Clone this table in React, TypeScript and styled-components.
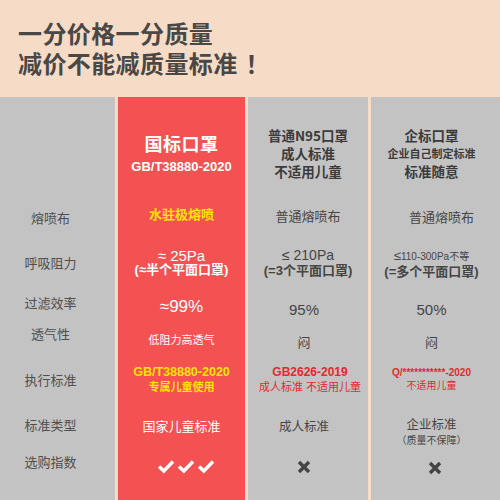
import React from 'react';
import styled, { createGlobalStyle } from 'styled-components';

const PEACH = '#f6dcc7';
const RED = '#f45252';
const GRAY = '#c4c3c3';
const YELLOW = '#ffe500';
const ALERT = '#e3292b';
const INK = '#454545';

const GlobalStyle = createGlobalStyle`
  body {
    margin: 0;
    background: ${PEACH};
    font-family: 'Liberation Sans', 'Noto Sans CJK SC', sans-serif;
  }
`;

const Page = styled.div`
  width: 500px;
  height: 500px;
  overflow: hidden;
  background: ${PEACH};
  display: flex;
  flex-direction: column;
`;

const Title = styled.h1`
  margin: 0;
  padding: 18px 0 0 18px;
  font-family: 'Noto Sans CJK SC', sans-serif;
  font-size: 24px;
  line-height: 30px;
  font-weight: 700;
  letter-spacing: 0.4px;
  color: #4a4846;
`;

const Bang = styled.span`
  margin-left: 8px;
`;

const Table = styled.div`
  margin-top: 19px;
  display: grid;
  grid-template-columns: 115px 127px 120px 1fr;
  grid-template-rows: 98px 45px 45px 37px 34px 48px 44px 52px;
  column-gap: 3px;
`;

type Tone = 'label' | 'red' | 'gray';

const Cell = styled.div<{ $tone: Tone; $dx?: number; $dy?: number }>`
  display: flex;
  flex-direction: column;
  align-items: center;
  justify-content: center;
  text-align: center;
  white-space: nowrap;
  background: ${({ $tone }) => ($tone === 'red' ? RED : GRAY)};
  color: ${({ $tone }) => ($tone === 'red' ? '#fff' : INK)};
  padding-left: ${({ $dx = 0 }) => Math.max(0, $dx * 2)}px;
  padding-right: ${({ $dx = 0 }) => Math.max(0, -$dx * 2)}px;
  padding-top: ${({ $dy = 0 }) => Math.max(0, $dy * 2)}px;
  padding-bottom: ${({ $dy = 0 }) => Math.max(0, -$dy * 2)}px;
`;

const HeadCell = styled(Cell)<{ $top: number }>`
  justify-content: flex-start;
  padding-top: ${({ $top }) => $top}px;
`;

const HeadTitle = styled.div`
  font-family: 'Noto Sans CJK SC', sans-serif;
  font-size: 18px;
  line-height: 24px;
  font-weight: 700;
  letter-spacing: 0.5px;
`;

const HeadCode = styled.div`
  margin-top: 4px;
  font-size: 13px;
  line-height: 16px;
  font-weight: 700;
`;

const HeadLine = styled.div<{ $size?: number }>`
  font-family: 'Noto Sans CJK SC', sans-serif;
  font-size: ${({ $size = 13.5 }) => $size}px;
  line-height: 18px;
  font-weight: 700;
  color: #3b3b3b;
`;

const RowLabel = styled.div`
  font-family: 'Noto Sans CJK SC', sans-serif;
  font-size: 13px;
  line-height: 16px;
  color: #4f4f4f;
`;

const Value = styled.div<{ $size: number; $bold?: boolean; $color?: string; $lh?: number }>`
  font-size: ${({ $size }) => $size}px;
  line-height: ${({ $lh, $size }) => $lh ?? $size + 2}px;
  font-weight: ${({ $bold }) => ($bold ? 700 : 400)};
  color: ${({ $color }) => $color ?? 'inherit'};
`;

const Small = styled.span`
  font-size: 10px;
`;

const Checks = () => (
  <svg width="58" height="15" viewBox="0 0 58 15">
    {[0, 20, 40].map((x) => (
      <polyline
        key={x}
        points={`${x + 2},7.5 ${x + 6.8},12 ${x + 16},2.5`}
        fill="none"
        stroke="#fff"
        strokeWidth="3.4"
      />
    ))}
  </svg>
);

const Cross = () => (
  <svg width="14" height="14" viewBox="0 0 14 14">
    <path d="M2 2 L12 12 M12 2 L2 12" stroke="#444" strokeWidth="3.4" />
  </svg>
);

export default function App() {
  return (
    <Page>
      <GlobalStyle />
      <Title>
        一分价格一分质量
        <br />
        减价不能减质量标准<Bang>！</Bang>
      </Title>

      <Table>
        {/* header */}
        <Cell $tone="label" />
        <HeadCell $tone="red" $top={34}>
          <HeadTitle>国标口罩</HeadTitle>
          <HeadCode>GB/T38880-2020</HeadCode>
        </HeadCell>
        <HeadCell $tone="gray" $top={29}>
          <HeadLine>
            普通N95口罩
            <br />
            成人标准
            <br />
            不适用儿童
          </HeadLine>
        </HeadCell>
        <HeadCell $tone="gray" $top={29} $dx={-4}>
          <HeadLine>企标口罩</HeadLine>
          <HeadLine $size={11}>企业自己制定标准</HeadLine>
          <HeadLine>标准随意</HeadLine>
        </HeadCell>

        {/* 熔喷布 */}
        <Cell $tone="label" $dx={-7}>
          <RowLabel>熔喷布</RowLabel>
        </Cell>
        <Cell $tone="red" $dy={-3}>
          <Value $size={13} $bold $color={YELLOW}>水驻极熔喷</Value>
        </Cell>
        <Cell $tone="gray" $dy={-1}>
          <Value $size={13}>普通熔喷布</Value>
        </Cell>
        <Cell $tone="gray" $dx={6}>
          <Value $size={13}>普通熔喷布</Value>
        </Cell>

        {/* 呼吸阻力 */}
        <Cell $tone="label" $dx={-7}>
          <RowLabel>呼吸阻力</RowLabel>
        </Cell>
        <Cell $tone="red">
          <Value $size={15} $lh={14}>≈ 25Pa</Value>
          <Value $size={13} $lh={14} $bold>(≈半个平面口罩)</Value>
        </Cell>
        <Cell $tone="gray">
          <Value $size={14} $lh={16}>≤ 210Pa</Value>
          <Value $size={13} $lh={16} $bold>(=3个平面口罩)</Value>
        </Cell>
        <Cell $tone="gray" $dx={-4} $dy={1}>
          <Value $size={13} $lh={15}>
            ≤<Small>110-300Pa不等</Small>
          </Value>
          <Value $size={13} $lh={15} $bold>(=多个平面口罩)</Value>
        </Cell>

        {/* 过滤效率 */}
        <Cell $tone="label" $dx={-7} $dy={-1}>
          <RowLabel>过滤效率</RowLabel>
        </Cell>
        <Cell $tone="red" $dy={3}>
          <Value $size={17}>≈99%</Value>
        </Cell>
        <Cell $tone="gray" $dx={-4} $dy={6}>
          <Value $size={15}>95%</Value>
        </Cell>
        <Cell $tone="gray" $dx={-4} $dy={6}>
          <Value $size={15}>50%</Value>
        </Cell>

        {/* 透气性 */}
        <Cell $tone="label" $dx={-7} $dy={-5}>
          <RowLabel>透气性</RowLabel>
        </Cell>
        <Cell $tone="red" $dy={1}>
          <Value $size={11}>低阻力高透气</Value>
        </Cell>
        <Cell $tone="gray" $dx={-4} $dy={3}>
          <Value $size={13}>闷</Value>
        </Cell>
        <Cell $tone="gray" $dx={-4} $dy={3}>
          <Value $size={13}>闷</Value>
        </Cell>

        {/* 执行标准 */}
        <Cell $tone="label" $dx={-7}>
          <RowLabel>执行标准</RowLabel>
        </Cell>
        <Cell $tone="red">
          <Value $size={12.5} $lh={15} $bold $color={YELLOW}>GB/T38880-2020</Value>
          <Value $size={11} $lh={15} $bold $color={YELLOW}>专属儿童使用</Value>
        </Cell>
        <Cell $tone="gray" $dx={2}>
          <Value $size={12} $lh={15} $bold $color={ALERT}>GB2626-2019</Value>
          <Value $size={11} $lh={15} $color={ALERT}>成人标准 不适用儿童</Value>
        </Cell>
        <Cell $tone="gray" $dx={-4} $dy={-1}>
          <Value $size={10} $lh={13} $bold $color={ALERT}>Q/***********-2020</Value>
          <Value $size={10} $lh={13} $color={ALERT}>不适用儿童</Value>
        </Cell>

        {/* 标准类型 */}
        <Cell $tone="label" $dx={-7} $dy={-1}>
          <RowLabel>标准类型</RowLabel>
        </Cell>
        <Cell $tone="red">
          <Value $size={13}>国家儿童标准</Value>
        </Cell>
        <Cell $tone="gray" $dx={-4} $dy={1}>
          <Value $size={12.5}>成人标准</Value>
        </Cell>
        <Cell $tone="gray" $dx={-4} $dy={7}>
          <Value $size={12.5} $lh={15}>企业标准</Value>
          <Value $size={10} $lh={15}>（质量不保障）</Value>
        </Cell>

        {/* 选购指数 */}
        <Cell $tone="label" $dx={-7} $dy={-12}>
          <RowLabel>选购指数</RowLabel>
        </Cell>
        <Cell $tone="red" $dx={4} $dy={-8}>
          <Checks />
        </Cell>
        <Cell $tone="gray" $dx={-4} $dy={-7}>
          <Cross />
        </Cell>
        <Cell $tone="gray" $dx={-1} $dy={-6}>
          <Cross />
        </Cell>
      </Table>
    </Page>
  );
}
